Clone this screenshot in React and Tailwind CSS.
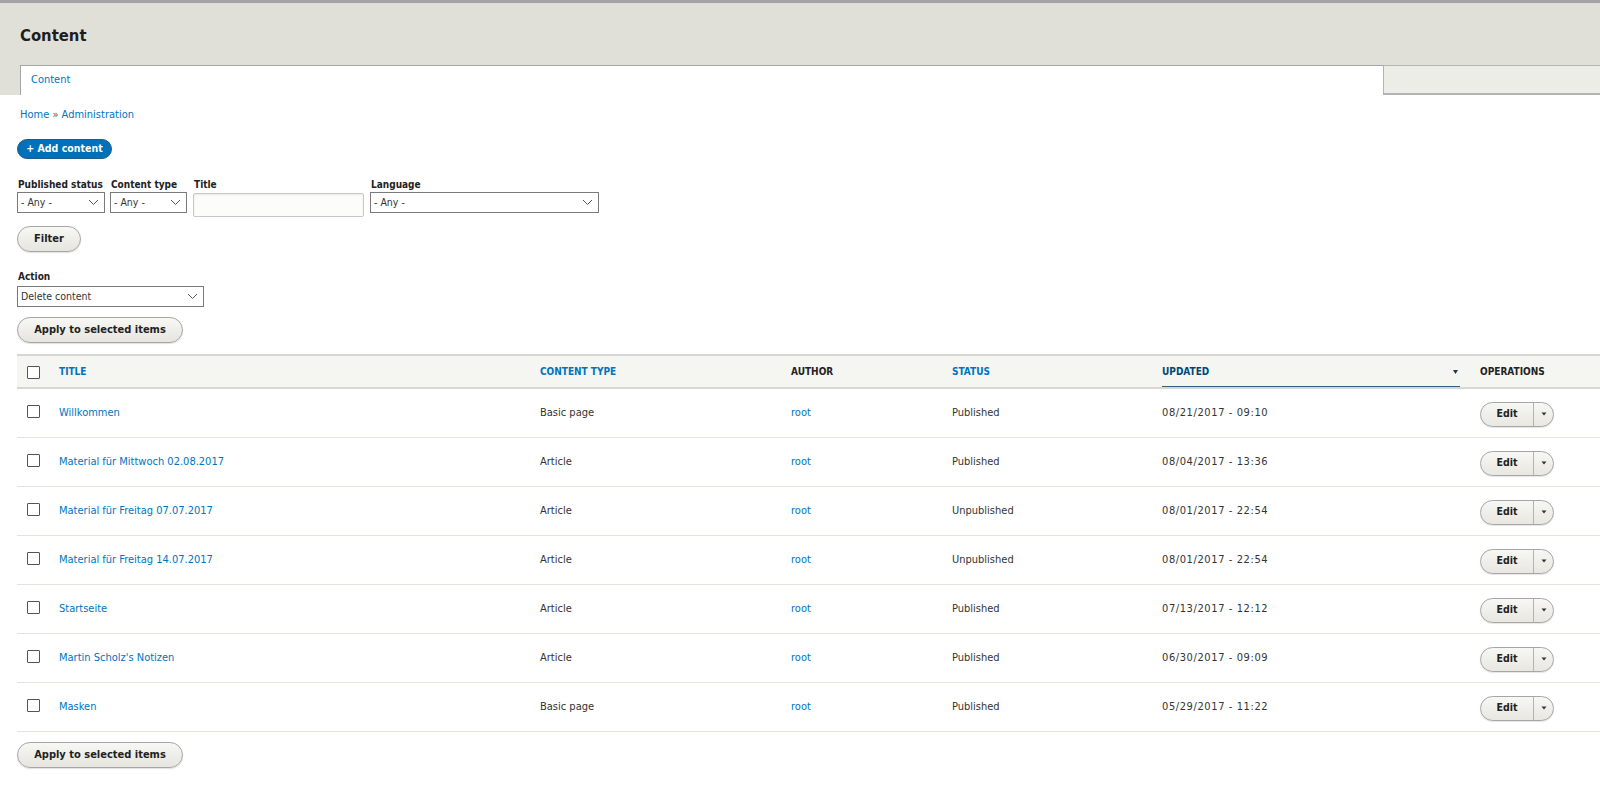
import React from "react";

const rows = [
  ["Willkommen", "Basic page", "Published", "08/21/2017 - 09:10"],
  ["Material für Mittwoch 02.08.2017", "Article", "Published", "08/04/2017 - 13:36"],
  ["Material für Freitag 07.07.2017", "Article", "Unpublished", "08/01/2017 - 22:54"],
  ["Material für Freitag 14.07.2017", "Article", "Unpublished", "08/01/2017 - 22:54"],
  ["Startseite", "Article", "Published", "07/13/2017 - 12:12"],
  ["Martin Scholz's Notizen", "Article", "Published", "06/30/2017 - 09:09"],
  ["Masken", "Basic page", "Published", "05/29/2017 - 11:22"],
];

function Chevron() {
  return (
    <svg width="11" height="7" viewBox="0 0 11 7" className="shrink-0">
      <path d="M1 1 L5.5 5.5 L10 1" fill="none" stroke="#555" strokeWidth="1" />
    </svg>
  );
}

function Select({ w, label }) {
  return (
    <div
      className={`flex h-[21px] items-center justify-between border border-[#7a7a7a] bg-white pl-[3px] pr-[5px] text-[10.5px] text-[#333] ${w}`}
    >
      <span>{label}</span>
      <Chevron />
    </div>
  );
}

function Btn({ children, w }) {
  return (
    <div
      className={`flex h-[26px] items-center justify-center rounded-full border border-[#a6a6a6] bg-gradient-to-b from-[#f7f7f4] to-[#e6e5df] text-[11px] font-bold text-[#222] shadow-[0_1px_1px_rgba(0,0,0,0.12)] ${w}`}
    >
      {children}
    </div>
  );
}

function Checkbox() {
  return <div className="h-[13px] w-[13px] rounded-[1px] border border-[#555] bg-white" />;
}

function EditButton() {
  return (
    <div className="flex h-[25px] w-[74px] items-stretch overflow-hidden rounded-full border border-[#a6a6a6] bg-gradient-to-b from-[#f7f7f4] to-[#e8e7e1] shadow-[0_1px_1px_rgba(0,0,0,0.1)]">
      <div className="flex w-[52px] items-center justify-center text-[10.5px] font-bold text-[#222]">Edit</div>
      <div className="flex flex-1 items-center justify-center border-l border-[#b3b3b3]">
        <svg width="6" height="4" viewBox="0 0 6 4">
          <path d="M0.5 0.5 L5.5 0.5 L3 3.5 Z" fill="#333" />
        </svg>
      </div>
    </div>
  );
}

const cols = "grid grid-cols-[42px_481px_251px_161px_210px_318px_1fr]";

export default function App() {
  return (
    <div className="min-h-[804px] bg-white font-['DejaVu_Sans_Condensed','DejaVu_Sans',sans-serif] text-[#333]">
      <div className="border-t-[3px] border-[#a4a4a4] bg-[#e0e0d8]">
        <h1 className="px-5 pt-[23px] pb-[19px] text-[16.5px] font-bold leading-[20px] text-[#1e1e1e]">Content</h1>
        <div className="flex h-[30px] pl-5">
          <div className="flex w-[1363px] items-center border-l border-t border-[#a6a6a6] bg-white pl-[10px] text-[11px] text-[#0074bd]">
            Content
          </div>
          <div className="flex flex-1 items-center justify-end overflow-hidden border-b-2 border-l border-t border-[#b4b4b4] bg-[#ededE8] text-[10px] text-[#0074bd]">
            <span className="mr-[-5px]">◂</span>
          </div>
        </div>
      </div>

      <div className="pl-[17px]">
        <div className="pt-[13px] pl-[3px] text-[11px] leading-[14px] text-[#0074bd]">
          Home <span className="text-[#555]">»</span> Administration
        </div>

        <div className="mt-[17px] flex h-[20px] w-[95px] items-center justify-center rounded-full border border-[#1e5c90] bg-[#0071b8] text-[10.5px] font-bold text-white">
          + Add content
        </div>

        <div className="mt-[18px] flex items-start gap-[5px]">
          <div className="flex flex-col">
            <div className="pl-[1px] text-[10px] font-bold leading-[15px] text-[#222]">Published status</div>
            <Select w="w-[88px]" label="- Any -" />
          </div>
          <div className="flex flex-col">
            <div className="pl-[1px] text-[10px] font-bold leading-[15px] text-[#222]">Content type</div>
            <Select w="w-[77px]" label="- Any -" />
          </div>
          <div className="ml-[1px] flex flex-col">
            <div className="pl-[1px] text-[10px] font-bold leading-[15px] text-[#222]">Title</div>
            <div className="mt-[1px] h-[24px] w-[171px] rounded-[2px] border border-[#c8c8c8] bg-[#fcfcfa] shadow-[inset_0_1px_2px_rgba(0,0,0,0.08)]" />
          </div>
          <div className="ml-[1px] flex flex-col">
            <div className="pl-[1px] text-[10px] font-bold leading-[15px] text-[#222]">Language</div>
            <Select w="w-[229px]" label="- Any -" />
          </div>
        </div>

        <div className="mt-[9px]">
          <Btn w="w-[64px]">Filter</Btn>
        </div>

        <div className="mt-[17px] pl-[1px] text-[10px] font-bold leading-[15px] text-[#222]">Action</div>
        <div className="mt-[2px]">
          <Select w="w-[187px]" label="Delete content" />
        </div>

        <div className="mt-[10px]">
          <Btn w="w-[166px]">Apply to selected items</Btn>
        </div>

        <div className="mt-[11px]">
          <div className={`${cols} h-[35px] items-center border-b-2 border-t-2 border-[#d8d8d3] bg-[#f5f5f2] text-[10px] font-bold uppercase`}>
            <div className="pl-[10px] pt-[1px]">
              <Checkbox />
            </div>
            <div className="text-[#0074bd]">Title</div>
            <div className="text-[#0074bd]">Content type</div>
            <div className="text-[#222]">Author</div>
            <div className="text-[#0074bd]">Status</div>
            <div className="flex h-full items-stretch pr-[20px]">
              <div className="flex flex-1 items-center justify-between border-b-[1.5px] border-[#3b5a7c] pr-[2px] pt-[1px] text-[#004875]">
                <span>Updated</span>
                <svg width="5" height="4" viewBox="0 0 5 4">
                  <path d="M0 0 L5 0 L2.5 4 Z" fill="#1b3a5c" />
                </svg>
              </div>
            </div>
            <div className="text-[#222]">Operations</div>
          </div>

          {rows.map((r, i) => (
            <div key={i} className={`${cols} h-[49px] items-center border-b border-[#e4e3de] text-[11px]`}>
              <div className="pl-[10px] pb-[3px]">
                <Checkbox />
              </div>
              <div className="text-[#0074bd]">{r[0]}</div>
              <div>{r[1]}</div>
              <div className="text-[#0074bd]">root</div>
              <div>{r[2]}</div>
              <div className="tracking-[0.6px]">{r[3]}</div>
              <div className="pt-[2px]">
                <EditButton />
              </div>
            </div>
          ))}
        </div>

        <div className="mt-[10px]">
          <Btn w="w-[166px]">Apply to selected items</Btn>
        </div>
      </div>
    </div>
  );
}
